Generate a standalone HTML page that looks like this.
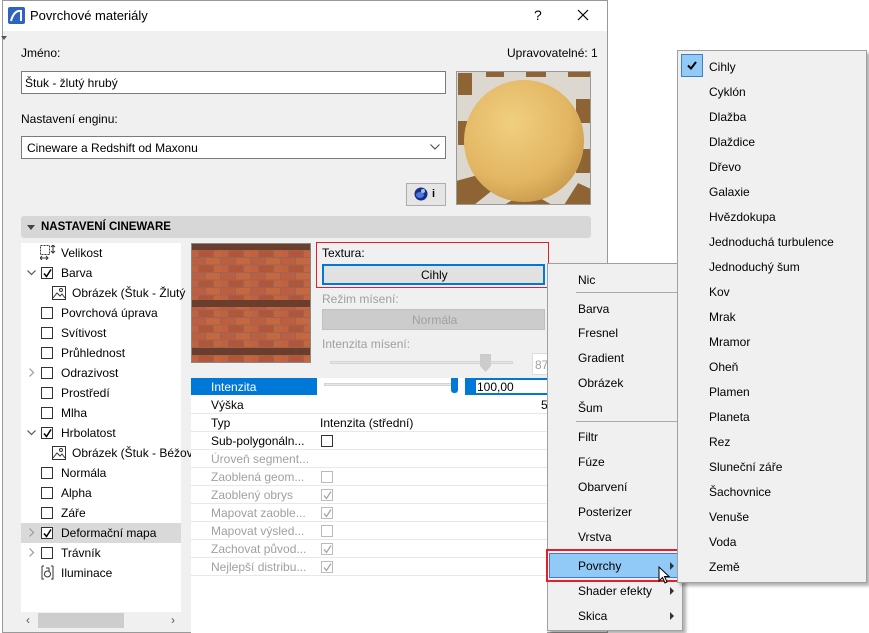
<!DOCTYPE html>
<html><head><meta charset="utf-8"><style>
*{box-sizing:border-box;margin:0;padding:0}
body{width:869px;height:633px;background:#fff;position:relative;overflow:hidden;font-family:"Liberation Sans",sans-serif;font-size:12px;color:#000}
.a{position:absolute}
.t{position:absolute;white-space:nowrap;line-height:14px}
.g{color:#a0a0a0}
.cb{position:absolute;width:12px;height:12px;border:1px solid #333;background:#fff}
.cbg{position:absolute;width:12px;height:12px;border:1px solid #bbb;background:#fff}
.row{position:absolute;left:191px;width:356px;height:18px;border-bottom:1px solid #e8e8e8}
.mi{position:absolute;white-space:nowrap;line-height:14px}
</style></head><body>
<div class="a" style="left:2px;top:0;width:606px;height:633px;background:#f0f0f0;border:1px solid #999"></div>
<div class="a" style="left:3px;top:1px;width:604px;height:30px;background:#fff"></div>
<svg class="a" style="left:8px;top:7px" width="17" height="17"><rect width="17" height="17" rx="2" fill="#2f63c0"/><path d="M3 14 Q6 3 13 4 L13 14" fill="none" stroke="#fff" stroke-width="2"/></svg>
<div class="t" style="left:30px;top:9px;font-size:13px">Povrchové materiály</div>
<div class="t" style="left:534px;top:8px;font-size:14px">?</div>
<svg class="a" style="left:577px;top:9px" width="12" height="12"><path d="M1 1L11 11M11 1L1 11" stroke="#000" stroke-width="1.2"/></svg>
<svg class="a" style="left:1px;top:36px" width="6" height="4"><path d="M0 0H6L3 4Z" fill="#555"/></svg>
<div class="t" style="left:21px;top:46px">Jméno:</div>
<div class="t" style="left:507px;top:46px">Upravovatelné: 1</div>
<div class="a" style="left:21px;top:71px;width:425px;height:23px;background:#fff;border:1px solid #7a7a7a"></div>
<div class="t" style="left:25px;top:76px">Štuk - žlutý hrubý</div>
<div class="t" style="left:21px;top:112px">Nastavení enginu:</div>
<div class="a" style="left:21px;top:136px;width:425px;height:23px;background:#fff;border:1px solid #7a7a7a"></div>
<div class="t" style="left:27px;top:141px">Cineware a Redshift od Maxonu</div>
<svg class="a" style="left:430px;top:144px" width="10" height="6"><path d="M0.5 0.5L5 5L9.5 0.5" fill="none" stroke="#444"/></svg>
<div class="a" style="left:406px;top:183px;width:40px;height:23px;background:#e5e5e5;border:1px solid #adadad"></div>
<svg class="a" style="left:413px;top:186px" width="16" height="16"><circle cx="8" cy="8" r="6.5" fill="#1a2c8a"/><ellipse cx="7" cy="9" rx="4" ry="3" fill="#4a78e0"/><circle cx="10" cy="5" r="2" fill="#9cc"/></svg>
<div class="t" style="left:432px;top:187px;font-weight:bold;font-size:11px">i</div>
<svg class="a" style="left:456px;top:71px" width="135" height="134">
<defs><radialGradient id="sp" cx="0.4" cy="0.35" r="0.7"><stop offset="0" stop-color="#f0cf80"/><stop offset="0.7" stop-color="#e2b562"/><stop offset="1" stop-color="#c89a4c"/></radialGradient></defs>
<rect width="135" height="134" fill="#dcd8d0"/>
<g fill="#8e6434">
<rect x="2" y="2" width="14" height="22"/><rect x="30" y="0" width="18" height="6"/><rect x="70" y="0" width="20" height="6"/><rect x="112" y="0" width="22" height="6"/>
<rect x="2" y="50" width="12" height="24"/><rect x="120" y="28" width="14" height="24"/><rect x="120" y="78" width="14" height="24"/>
<polygon points="0,110 22,104 38,118 18,134 0,134"/><polygon points="48,134 72,120 96,134"/><polygon points="108,134 122,112 135,118 135,134"/></g>
<rect x="0.5" y="0.5" width="134" height="133" fill="none" stroke="#999"/>
<ellipse cx="68" cy="70" rx="60" ry="61" fill="url(#sp)"/>
</svg>
<div class="a" style="left:21px;top:216px;width:570px;height:22px;background:#d7d7d7;border-radius:3px"></div>
<svg class="a" style="left:27px;top:225px" width="8" height="5"><path d="M0 0H8L4 5Z" fill="#444"/></svg>
<div class="t" style="left:41px;top:220px;font-weight:bold;font-size:11.5px">NASTAVENÍ CINEWARE</div>
<div class="a" style="left:21px;top:243px;width:160px;height:380px;background:#fff"></div>
<div class="a" style="left:21px;top:523px;width:160px;height:20px;background:#d9d9d9"></div>
<svg class="a" style="left:40px;top:245px" width="16" height="15"><rect x="0.5" y="0.5" width="9" height="9" fill="none" stroke="#333" stroke-dasharray="2 1"/><path d="M13 0V8M11 2L13 0L15 2M11 6L13 8L15 6M0 13H8M2 11L0 13L2 15M6 11L8 13L6 15" stroke="#333" fill="none"/></svg>
<div class="t" style="left:61px;top:246px">Velikost</div>
<div id="tree"></div>
<div class="a" style="left:21px;top:612px;width:160px;height:17px;background:#f0f0f0"></div>
<div class="a" style="left:38px;top:613px;width:86px;height:15px;background:#cdcdcd"></div>
<div class="t" style="left:26px;top:613px;color:#555">&lsaquo;</div>
<div class="t" style="left:171px;top:613px;color:#555">&rsaquo;</div>
<svg class="a" style="left:191px;top:243px" width="120" height="120">
<defs><pattern id="b" width="30" height="15" patternUnits="userSpaceOnUse">
<rect width="30" height="15" fill="#9a6555"/>
<rect x="0" y="0" width="14" height="6.5" fill="#bd5e40"/><rect x="15" y="0" width="14" height="6.5" fill="#c6683f"/>
<rect x="-7" y="7.5" width="14" height="6.5" fill="#c0623f"/><rect x="8" y="7.5" width="14" height="6.5" fill="#b2563a"/><rect x="23" y="7.5" width="14" height="6.5" fill="#c46540"/>
</pattern></defs>
<rect width="120" height="120" fill="url(#b)"/>
<rect y="0" width="120" height="7" fill="#6a3e2c"/><rect y="57" width="120" height="7" fill="#6a3e2c"/><rect y="105" width="120" height="7" fill="#6a3e2c"/>
<rect x="0.5" y="0.5" width="119" height="119" fill="none" stroke="#888"/>
</svg>
<div class="a" style="left:316px;top:242px;width:233px;height:46px;border:1.5px solid #e0202a"></div>
<div class="t" style="left:322px;top:246px">Textura:</div>
<div class="a" style="left:322px;top:264px;width:223px;height:21px;background:#e1e1e1;border:2px solid #0078d7"></div>
<div class="t" style="left:421px;top:268px">Cihly</div>
<div class="t g" style="left:322px;top:292px">Režim mísení:</div>
<div class="a" style="left:322px;top:309px;width:223px;height:21px;background:#ccc;border:1px solid #c0c0c0"></div>
<div class="t g" style="left:412px;top:313px">Normála</div>
<div class="t g" style="left:322px;top:337px">Intenzita mísení:</div>
<div class="a" style="left:330px;top:361px;width:183px;height:3px;background:#e7e7e7;border:1px solid #d5d5d5"></div>
<svg class="a" style="left:480px;top:354px" width="11" height="18"><path d="M0 0H11V12L5.5 18L0 12Z" fill="#ccc"/></svg>
<div class="a" style="left:532px;top:353px;width:20px;height:22px;background:#fff;border:1px solid #ddd"></div>
<div class="t g" style="left:535px;top:358px">87</div>
<div class="a" style="left:191px;top:378px;width:356px;height:255px;background:#fff"></div>
<div class="a" style="left:191px;top:378px;width:126px;height:17px;background:#0078d7"></div>
<div class="t" style="left:211px;top:380px;color:#fff">Intenzita</div>
<div class="a" style="left:324px;top:383px;width:134px;height:3px;background:#e7e7e7;border:1px solid #d5d5d5"></div>
<div class="a" style="left:451px;top:378px;width:7px;height:15px;background:#0078d7;border-radius:0 0 3px 3px"></div>
<div class="a" style="left:465px;top:378px;width:85px;height:17px;background:#0078d7"></div>
<div class="a" style="left:476px;top:380px;width:74px;height:13px;background:#fff"></div>
<div class="t" style="left:477px;top:380px">100,00</div>
<div id="props"></div>
<div class="a" style="left:547px;top:263px;width:136px;height:368px;background:#f0f0f0;border:1px solid #a0a0a0;box-shadow:3px 3px 3px rgba(0,0,0,.3)"></div>
<div class="a" style="left:576px;top:292px;width:102px;height:1px;background:#aaa"></div>
<div class="a" style="left:576px;top:421px;width:102px;height:1px;background:#aaa"></div>
<div class="a" style="left:549px;top:553px;width:131px;height:25px;background:#91c9f7;border:1px solid #3f7fbf"></div>
<div class="a" style="left:546px;top:549px;width:137px;height:33px;border:2px solid #e0202a"></div>
<div id="sub"></div>
<svg class="a" style="left:658px;top:566px" width="14" height="20"><path d="M1 1V15L4.5 11.5L7 17L9 16L6.5 10.5H11Z" fill="#fff" stroke="#000"/></svg>
<div class="a" style="left:677px;top:50px;width:190px;height:533px;background:#f0f0f0;border:1px solid #a0a0a0;box-shadow:3px 3px 3px rgba(0,0,0,.3)"></div>
<div class="a" style="left:681px;top:54px;width:22px;height:23px;background:#91c9f7;border:1px solid #3f7fbf"></div>
<svg class="a" style="left:687px;top:61px" width="10" height="9"><path d="M1 4.5L4 7.5L9 1" fill="none" stroke="#000" stroke-width="2"/></svg>
<div id="menu"></div>
<script>
var h='';
var tr=[["Barva",1,1,0],["Obrázek (Štuk - Žlutý",0,0,2],["Povrchová úprava",0,0,0],["Svítivost",0,0,0],["Průhlednost",0,0,0],["Odrazivost",0,2,0],["Prostředí",0,0,0],["Mlha",0,0,0],["Hrbolatost",1,1,0],["Obrázek (Štuk - Béžov",0,0,2],["Normála",0,0,0],["Alpha",0,0,0],["Záře",0,0,0],["Deformační mapa",1,2,0],["Trávník",0,2,0],["Iluminace",0,0,3]];
tr.forEach(function(r,i){var y=253+20*(i+1);
 if(r[2]==1)h+='<svg class="a" style="left:27px;top:'+(y-3)+'px" width="9" height="6"><path d="M0.5 0.5L4.5 4.5L8.5 0.5" fill="none" stroke="#555" stroke-width="1.2"/></svg>';
 if(r[2]==2)h+='<svg class="a" style="left:29px;top:'+(y-5)+'px" width="6" height="9"><path d="M0.5 0.5L4.5 4.5L0.5 8.5" fill="none" stroke="#999" stroke-width="1.2"/></svg>';
 if(r[3]==2){h+='<svg class="a" style="left:52px;top:'+(y-7)+'px" width="14" height="14"><rect x="0.5" y="0.5" width="13" height="13" fill="#fff" stroke="#333"/><path d="M1 12L5 7L8 10L10 8L13 12" fill="none" stroke="#333"/><circle cx="9" cy="4" r="1.5" fill="none" stroke="#333"/></svg>';h+='<div class="t" style="left:72px;top:'+(y-7)+'px">'+r[0]+'</div>';}
 else if(r[3]==3){h+='<svg class="a" style="left:41px;top:'+(y-8)+'px" width="13" height="15"><path d="M1 1H3M10 1H12M1 1V14H3M12 1V14H10" fill="none" stroke="#333"/><circle cx="6.5" cy="9" r="3" fill="none" stroke="#333"/><path d="M5 3H8V6" fill="none" stroke="#333"/></svg>';h+='<div class="t" style="left:61px;top:'+(y-7)+'px">'+r[0]+'</div>';}
 else{h+='<div class="cb" style="left:41px;top:'+(y-6)+'px"></div>';
  if(r[1])h+='<svg class="a" style="left:42px;top:'+(y-5)+'px" width="11" height="11"><path d="M2 5.5L4.5 8.5L9 1.5" fill="none" stroke="#000" stroke-width="1.5"/></svg>';
  h+='<div class="t" style="left:61px;top:'+(y-7)+'px">'+r[0]+'</div>';}
});
document.getElementById('tree').innerHTML=h;
h='';
var pr=[["Výška",0,"",0],["Typ",0,"Intenzita (střední)",0],["Sub-polygonáln...",0,"",1],["Úroveň segment...",1,"",0],["Zaoblená geom...",1,"",2],["Zaoblený obrys",1,"",3],["Mapovat zaoble...",1,"",3],["Mapovat výsled...",1,"",2],["Zachovat původ...",1,"",3],["Nejlepší distribu...",1,"",3]];
pr.forEach(function(r,i){var y=396+18*i;
 h+='<div class="row" style="top:'+y+'px"></div>';
 h+='<div class="t'+(r[1]?' g':'')+'" style="left:211px;top:'+(y+2)+'px">'+r[0]+'</div>';
 if(r[2])h+='<div class="t" style="left:320px;top:'+(y+2)+'px">'+r[2]+'</div>';
 if(r[3]==1)h+='<div class="cb" style="left:321px;top:'+(y+3)+'px"></div>';
 if(r[3]>=2)h+='<div class="cbg" style="left:321px;top:'+(y+3)+'px"></div>';
 if(r[3]==3)h+='<svg class="a" style="left:322px;top:'+(y+4)+'px" width="11" height="11"><path d="M2 5.5L4.5 8.5L9 1.5" fill="none" stroke="#aaa" stroke-width="1.4"/></svg>';
});
h+='<div class="t" style="left:541px;top:398px">5</div>';
document.getElementById('props').innerHTML=h;
h='';
var sb=[["Nic",280],["Barva",309],["Fresnel",333],["Gradient",358],["Obrázek",383],["Šum",408],["Filtr",437],["Fúze",462],["Obarvení",487],["Posterizer",512],["Vrstva",537],["Povrchy",566,1],["Shader efekty",591,1],["Skica",616,1]];
sb.forEach(function(r){h+='<div class="mi" style="left:578px;top:'+(r[1]-7)+'px">'+r[0]+'</div>';
 if(r[2])h+='<svg class="a" style="left:670px;top:'+(r[1]-4)+'px" width="4" height="8"><path d="M0 0L4 4L0 8Z" fill="#333"/></svg>';});
document.getElementById('sub').innerHTML=h;
h='';
["Cihly","Cyklón","Dlažba","Dlaždice","Dřevo","Galaxie","Hvězdokupa","Jednoduchá turbulence","Jednoduchý šum","Kov","Mrak","Mramor","Oheň","Plamen","Planeta","Rez","Sluneční záře","Šachovnice","Venuše","Voda","Země"].forEach(function(s,i){h+='<div class="mi" style="left:709px;top:'+(60+25*i)+'px">'+s+'</div>';});
document.getElementById('menu').innerHTML=h;
</script>
</body></html>
